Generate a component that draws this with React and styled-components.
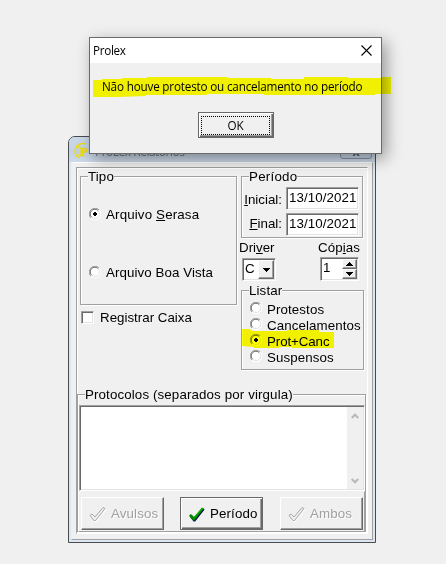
import React from "react";
import styled, { createGlobalStyle, css } from "styled-components";

const Global = createGlobalStyle`
  * { box-sizing: border-box; }
  html, body { margin: 0; background: #f0f0f0; overflow: hidden; }
  button, input, textarea { font: inherit; color: inherit; border-radius: 0; }
`;

const face = "#f0f0f0";
const sunken = css`
  border: 1px solid;
  border-color: #a0a0a0 #fff #fff #a0a0a0;
  box-shadow: inset 1px 1px #696969, inset -1px -1px #e3e3e3;
`;
const raised = css`
  border: 1px solid;
  border-color: #fff #696969 #696969 #fff;
  box-shadow: inset -1px -1px #a0a0a0;
`;

const Desktop = styled.main`
  position: relative;
  width: 446px;
  height: 564px;
  overflow: hidden;
  background: ${face};
  color: #000;
  font: 13.33px/16px "Liberation Sans", Arial, sans-serif;
  white-space: nowrap;
`;

const Window = styled.section`
  position: absolute;
  left: 68px;
  top: 136px;
  width: 308px;
  height: 407px;
  padding: 0 2px 2px;
  border: 1px solid #494b4f;
  border-radius: 7px 7px 0 0;
  background: #dbe6f2;
  overflow: hidden;
`;
const TitleBar = styled.header`
  display: flex;
  height: 25px;
  margin: 0 -2px;
  padding: 6px 3px 0 5px;
  background: linear-gradient(#cbd8e6, #c3d2e2 60%, #cddae8);
`;
const WindowTitle = styled.span`
  margin: 1px auto 0 6px;
  color: #6d747e;
  font: 12px/15px "Open Sans", "Noto Sans", sans-serif;
  letter-spacing: -0.5px;
`;
const CaptionButton = styled.span`
  width: 32px;
  height: 16px;
  border: 1px solid #8593ab;
  border-radius: 0 0 3px 3px;
  background: #c4d2e2;
  color: #4d535c;
  text-align: center;
  font: bold 13px/15px "Liberation Sans", sans-serif;
`;
const Client = styled.div`
  height: 378px;
  padding: 4px 4px 5px;
  border: 1px solid;
  border-color: #fff #a0a0a0 #a0a0a0 ${face};
  background: ${face};
`;
const Panel = styled.div`
  display: flex;
  flex-direction: column;
  width: 292px;
  height: 367px;
  border: 1px solid;
  border-color: #a0a0a0 #fff #fff #a0a0a0;
  box-shadow: inset 1px 1px #fff;
`;
const Columns = styled.div`
  display: flex;
  height: 226px;
  padding: 8px 0 0 3px;
`;
const LeftColumn = styled.div`
  width: 159px;
`;
const RightColumn = styled.div`
  width: 126px;
`;

const Group = styled.fieldset`
  min-width: 0;
  width: ${(p) => p.$w}px;
  height: ${(p) => p.$h}px;
  margin: ${(p) => p.$m || "0"};
  padding: 0;
  border: 1px solid #a0a0a0;
  box-shadow: 1px 1px #fff, inset 1px 1px #fff;
`;
const Legend = styled.div`
  width: max-content;
  height: 16px;
  margin: -8px 0 0 7px;
  background: ${face};
  letter-spacing: ${(p) => p.$ls || 0.12}px;
`;
const Text = styled.span`
  letter-spacing: ${(p) => p.$ls || 0}px;
`;
const RadioRow = styled.label`
  display: flex;
  height: 16px;
  gap: 5px;
  margin: ${(p) => p.$m};
`;
const RadioText = styled(Text)`
  margin-top: ${(p) => p.$top || 0}px;
`;
const RadioSvg = styled.svg`
  flex: none;
  width: 12px;
  height: 12px;
`;
const CheckRow = styled.label`
  display: flex;
  gap: 6px;
  margin: 6px 0 0 1px;
  line-height: 14px;
`;
const CheckBox = styled.span`
  width: 13px;
  height: 13px;
  background: #fff;
  ${sunken}
`;
const Field = styled.div`
  display: flex;
  justify-content: flex-end;
  gap: 4px;
  height: 22px;
  margin: ${(p) => p.$m};
`;
const FieldLabel = styled.span`
  padding-top: ${(p) => p.$top}px;
  letter-spacing: 0;
`;
const DateBox = styled.div`
  width: 73px;
  height: 23px;
  padding: 2px 0 0 2px;
  background: #fff;
  letter-spacing: 0.08px;
  ${sunken}
`;
const OptionRow = styled.div`
  display: flex;
  justify-content: space-between;
  width: 121px;
  height: 41px;
  margin-top: 2px;
`;
const Option = styled.div`
  display: flex;
  flex-direction: column;
  width: ${(p) => p.$w}px;
  gap: 1px;
`;
const Combo = styled.div`
  display: flex;
  justify-content: space-between;
  width: ${(p) => p.$w}px;
  height: ${(p) => p.$h}px;
  margin: ${(p) => p.$m};
  padding: 1px 1px 1px 2px;
  background: #fff;
  ${sunken}
`;
const Value = styled.span`
  padding-top: ${(p) => p.$top}px;
`;
const DropButton = styled.span`
  display: flex;
  align-items: center;
  justify-content: center;
  width: 16px;
  background: ${face};
  ${raised}
`;
const Spinner = styled.span`
  display: grid;
  grid-template-rows: 1fr 1fr;
  width: 15px;
`;
const SpinButton = styled(DropButton)`
  width: 15px;
`;
const Memo = styled.div`
  display: flex;
  justify-content: flex-end;
  width: 286px;
  height: 86px;
  margin: 2px 0 0 1px;
  padding: 1px;
  background: #fff;
  ${sunken}
`;
const ScrollBar = styled.div`
  display: flex;
  flex-direction: column;
  justify-content: space-between;
  align-items: center;
  width: 16px;
  padding: 6px 0 5px;
  background: ${face};
`;
const ButtonRow = styled.div`
  display: grid;
  grid-template-columns: 99px 100px 83px;
  height: 41px;
  width: 287px;
  padding: 5px 0 0 2px;
  border: 1px solid;
  border-color: ${face} #a0a0a0 #a0a0a0 #fff;
`;
const PushButton = styled.button`
  display: flex;
  align-items: center;
  width: 83px;
  height: 33px;
  padding: 0 0 0 7px;
  gap: 4px;
  background: ${face};
  letter-spacing: 0.12px;
  ${raised}
  ${(p) =>
    p.$primary &&
    css`
      border-color: #696969;
      box-shadow: inset 1px 1px #fff, inset -1px -1px #696969, inset -2px -2px #a0a0a0;
    `}
  ${(p) =>
    p.disabled &&
    css`
      color: #a0a0a0;
      text-shadow: 1px 1px #fff;
    `}
`;

const Dialog = styled.section`
  position: absolute;
  left: 89px;
  top: 37px;
  width: 293px;
  height: 117px;
  border: 1px solid #6b6b6b;
  background: ${face};
  box-shadow: 4px 5px 15px rgba(0, 0, 0, 0.38);
  font: 11.7px/16px "Open Sans", "Noto Sans", sans-serif;
`;
const DialogTitle = styled.header`
  display: flex;
  align-items: center;
  justify-content: space-between;
  height: 25px;
  padding: 0 9px 1px 3px;
  background: #fff;
`;
const DialogBody = styled.div`
  display: flex;
  flex-direction: column;
  padding: 15px 0 0 12px;
`;
const OkButton = styled.button`
  width: 76px;
  height: 26px;
  margin: 18px 0 0 96px;
  padding: 2px;
  border: 1px solid #696969;
  background: ${face};
  box-shadow: inset 1px 1px #fff, inset -1px -1px #696969, inset -2px -2px #a0a0a0;
`;
const FocusRing = styled.span`
  display: block;
  height: 19px;
  margin: 0 1px 0 0;
  border: 1px dotted #000;
  line-height: 16px;
`;
const Marker = styled.svg`
  position: absolute;
  left: ${(p) => p.$x}px;
  top: ${(p) => p.$y}px;
  mix-blend-mode: multiply;
  fill: #ff0;
`;
const LogoLetter = styled.text`
  font: bold 13px "Liberation Serif", serif;
  fill: #f2dc00;
  stroke: #f2dc00;
  stroke-width: 0.4px;
`;

function Radio({ checked }) {
  return (
    <RadioSvg viewBox="0 0 12 12">
      <circle cx="6" cy="6" r="5" fill="#fff" />
      <path d="M1.9 10.1A5.5 5.5 0 0 1 10.1 1.9" fill="none" stroke="#a0a0a0" />
      <path d="M2.6 9.2A4.5 4.5 0 0 1 9.2 2.6" fill="none" stroke="#696969" />
      <path d="M2.8 9.2A4.5 4.5 0 0 0 9.2 2.8" fill="none" stroke="#e3e3e3" />
      <path d="M1.9 10.1A5.5 5.5 0 0 0 10.1 1.9" fill="none" stroke="#fff" />
      {checked && <path d="M5 4h2v1h1v2H7v1H5V7H4V5h1z" fill="#000" />}
    </RadioSvg>
  );
}

function Arrow({ up }) {
  return (
    <svg width="7" height="4" viewBox="0 0 7 4" shapeRendering="crispEdges">
      <path d={up ? "M3 0h1v1h1v1h1v1h1v1H0V3h1V2h1V1h1z" : "M0 0h7v1H6v1H5v1H4v1H3V3H2V2H1V1H0z"} />
    </svg>
  );
}

function Chevron({ down }) {
  return (
    <svg width="8" height="6" viewBox="0 0 8 6">
      <path d={down ? "M.7 1 4 4.3 7.3 1" : "M.7 5 4 1.7 7.3 5"} fill="none" stroke="#b8b8b8" strokeWidth="2" />
    </svg>
  );
}

const tick = "M1 9.5 3 8 6 11 14 1.5 16 2.5 6.5 14.5H5z";

function Tick({ muted }) {
  return (
    <svg width="18" height="16" viewBox="0 0 18 16">
      {muted ? (
        <>
          <path d={tick} transform="translate(1 1)" fill="none" stroke="#fff" />
          <path d={tick} fill={face} stroke="#a0a0a0" strokeWidth=".9" />
        </>
      ) : (
        <>
          <path d={tick} transform="translate(.6 .9)" fill="#00005c" />
          <path d={tick} fill="#008a00" />
          <path d="m6 11.5 8.5-9.5" stroke="#00c800" strokeWidth="1" />
        </>
      )}
    </svg>
  );
}

function Logo() {
  return (
    <svg width="15" height="16" viewBox="0 0 15 16" fill="none" stroke="#f2dc00">
      <path d="M12 1C6-.8 1 3 1 8c0 3.500 2 6 5 7" strokeWidth="1.300" />
      <path d="M4.800 3C3 5.500 3 10 4.300 12.500" strokeWidth="1" />
      <LogoLetter x="5.500" y="12.500">P</LogoLetter>
    </svg>
  );
}

const listOptions = [
  { label: "Protestos", ls: 0.1 },
  { label: "Cancelamentos", ls: 0.08 },
  { label: "Prot+Canc", ls: -0.1 },
  { label: "Suspensos", ls: 0.1 },
];

export default function App() {
  return (
    <Desktop>
      <Global />
      <Window>
        <TitleBar>
          <Logo />
          <WindowTitle>ProLex Relatórios</WindowTitle>
          <CaptionButton>x</CaptionButton>
        </TitleBar>
        <Client>
          <Panel>
            <Columns>
              <LeftColumn>
                <Group $w={157} $h={129}>
                  <Legend>Tipo</Legend>
                  <RadioRow $m="23px 0 0 8px">
                    <Radio checked />
                    <RadioText $top={-1} $ls={0.15}>Arquivo <u>S</u>erasa</RadioText>
                  </RadioRow>
                  <RadioRow $m="42px 0 0 8px">
                    <Radio />
                    <RadioText $top={-1} $ls={0.08}>Arquivo Boa Vista</RadioText>
                  </RadioRow>
                </Group>
                <CheckRow>
                  <CheckBox />
                  <Text>Registrar Caixa</Text>
                </CheckRow>
              </LeftColumn>
              <RightColumn>
                <Group $w={122} $h={62} $m="0 0 0 2px">
                  <Legend $ls={0.25}>Período</Legend>
                  <Field $m="2px 3px 0 0">
                    <FieldLabel $top={5}><u>I</u>nicial:</FieldLabel>
                    <DateBox>13/10/2021</DateBox>
                  </Field>
                  <Field $m="4px 3px 0 0">
                    <FieldLabel $top={3}><u>F</u>inal:</FieldLabel>
                    <DateBox>13/10/2021</DateBox>
                  </Field>
                </Group>
                <OptionRow>
                  <Option $w={37}>
                    <Text>Dri<u>v</u>er</Text>
                    <Combo $w={34} $h={23} $m="1px 0 0 3px">
                      <Value $top={1}>C</Value>
                      <DropButton><Arrow /></DropButton>
                    </Combo>
                  </Option>
                  <Option $w={42}>
                    <Text $ls={0.1}>Cóp<u>i</u>as</Text>
                    <Combo $w={39} $h={25} $m="0 0 0 2px">
                      <Value $top={1}>1</Value>
                      <Spinner>
                        <SpinButton><Arrow up /></SpinButton>
                        <SpinButton><Arrow /></SpinButton>
                      </Spinner>
                    </Combo>
                  </Option>
                </OptionRow>
                <Group $w={123} $h={80} $m="9px 0 0 2px">
                  <Legend>Listar</Legend>
                  {listOptions.map((o, i) => (
                    <RadioRow key={o.label} $m={i ? "0 0 0 8px" : "3px 0 0 8px"}>
                      <Radio checked={i === 2} />
                      <RadioText $ls={o.ls}>{o.label}</RadioText>
                    </RadioRow>
                  ))}
                </Group>
              </RightColumn>
            </Columns>
            <Group $w={289} $h={138}>
              <Legend>Protocolos (separados por virgula)</Legend>
              <Memo>
                <ScrollBar>
                  <Chevron />
                  <Chevron down />
                </ScrollBar>
              </Memo>
              <ButtonRow>
                <PushButton disabled><Tick muted />Avulsos</PushButton>
                <PushButton $primary><Tick />Período</PushButton>
                <PushButton disabled><Tick muted />Ambos</PushButton>
              </ButtonRow>
            </Group>
          </Panel>
        </Client>
      </Window>

      <Dialog>
        <DialogTitle>
          <Text $ls={-0.3}>Prolex</Text>
          <svg width="11" height="11" viewBox="0 0 11 11" stroke="#000" strokeWidth="1.1">
            <path d="m.5.5 10 10m0-10-10 10" />
          </svg>
        </DialogTitle>
        <DialogBody>
          <Text $ls={-0.18}>Não houve protesto ou cancelamento no período</Text>
          <OkButton>
            <FocusRing>OK</FocusRing>
          </OkButton>
        </DialogBody>
      </Dialog>

      <Marker $x={93} $y={77} width="298" height="20">
        <path d="M0 3h9V2h20V1h25V0h80l1 1h43v1h33V0h44v1h33V0h10v17h-16v1H171v-1H114v1H53l-1 1-27 1H0z" />
      </Marker>
      <Marker $x={242} $y={329} width="93" height="20">
        <path d="M0 0h7l4 2h32l4-1h30v2h15v16H50v-1H38l-1 1H12v-1L0 17z" />
      </Marker>
    </Desktop>
  );
}
